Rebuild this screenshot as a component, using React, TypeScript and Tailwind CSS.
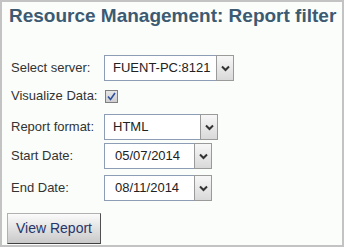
import React from 'react';

const font = { fontFamily: '"Liberation Sans", Arial, sans-serif' };

function Chevron() {
  return (
    <svg width="9" height="7" viewBox="0 0 9 7">
      <path d="M1 1.5 L4.5 5 L8 1.5" fill="none" stroke="#333" strokeWidth="2" />
    </svg>
  );
}

function SelectBox({ value, width, pad = 'pl-[8px]' }: { value: string; width: string; pad?: string }) {
  return (
    <div className={`${width} h-[26px] flex items-stretch border border-[#8d9db6] bg-white`}>
      <div className={`flex-1 flex items-center ${pad} text-[13px] text-[#222] whitespace-nowrap`}>{value}</div>
      <div className="w-[18px] flex items-center justify-center border border-[#9a9a9a] bg-gradient-to-b from-[#f7f7f7] to-[#d9d9d9] -mt-px -mr-px -mb-px">
        <Chevron />
      </div>
    </div>
  );
}

export default function App() {
  return (
    <div style={font} className="w-[344px] h-[247px] overflow-hidden border-2 border-[#c3c3c3] bg-[#fafdfa] text-[#333]">
      <h1 className="pl-[7px] pt-[3px] text-[19px] leading-[22px] font-bold text-[#3c5a72] whitespace-nowrap">
        Resource Management: Report filter
      </h1>

      <div className="flex flex-col">
        <div className="flex items-center mt-[28px]">
          <span className="w-[102px] shrink-0 pl-[9px] text-[13px] whitespace-nowrap">Select server:</span>
          <SelectBox value="FUENT-PC:8121" width="w-[130px]" />
        </div>

        <div className="flex items-center mt-[8px] h-[14px]">
          <span className="w-[103px] shrink-0 pl-[9px] text-[13px] whitespace-nowrap">Visualize Data:</span>
          <div className="w-[13px] h-[13px] border border-[#7f7f7f] bg-gradient-to-b from-[#e6e6e6] to-[#cfcfcf] flex items-center justify-center">
            <svg width="9" height="9" viewBox="0 0 9 9">
              <path d="M1 4.5 L3.5 7.5 L8 1" fill="none" stroke="#2f4f9f" strokeWidth="1.6" />
            </svg>
          </div>
        </div>

        <div className="flex items-center mt-[11px]">
          <span className="w-[102px] shrink-0 pl-[9px] text-[13px] whitespace-nowrap">Report format:</span>
          <SelectBox value="HTML" width="w-[114px]" />
        </div>

        <div className="flex items-center mt-[3px]">
          <span className="w-[102px] shrink-0 pl-[9px] text-[13px] whitespace-nowrap">Start Date:</span>
          <SelectBox value="05/07/2014" width="w-[108px]" pad="pl-[10px]" />
        </div>

        <div className="flex items-center mt-[6px]">
          <span className="w-[102px] shrink-0 pl-[9px] text-[13px] whitespace-nowrap">End Date:</span>
          <SelectBox value="08/11/2014" width="w-[108px]" pad="pl-[10px]" />
        </div>

        <div className="mt-[12px] pl-[5px]">
          <button className="w-[94px] h-[31px] text-[14px] text-[#27356b] border border-t-[#b0b0b0] border-l-[#b0b0b0] border-r-[#505050] border-b-[#404040] bg-gradient-to-b from-[#fbfbfb] to-[#c9c9c9]">
            View Report
          </button>
        </div>
      </div>
    </div>
  );
}
